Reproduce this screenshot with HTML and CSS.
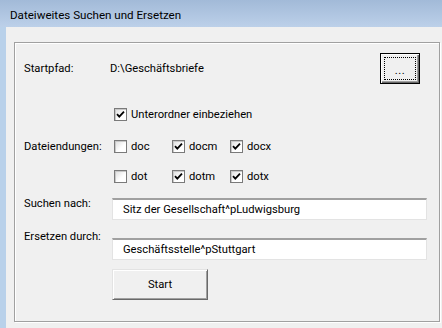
FILE: index.html
```html
<!DOCTYPE html>
<html lang="de">
<head>
<meta charset="utf-8">
<title>Dateiweites Suchen und Ersetzen</title>
<link rel="stylesheet" href="styles.css">
</head>
<body>
<div class="window">
  <div class="titlebar">Dateiweites Suchen und Ersetzen</div>
  <div class="client">
    <div class="group">
      <div class="row row-path">
        <span class="label">Startpfad:</span>
        <span class="path">D:\Geschäftsbriefe</span>
        <button class="btn btn-default"><span class="focus">...</span></button>
      </div>
      <div class="row row-sub">
        <span class="label"></span>
        <label class="check"><span class="box checked"><svg viewBox="0 0 13 13" width="13" height="13"><path d="M3 6.2 L5.3 8.6 L10 3.6" fill="none" stroke="#000" stroke-width="1.8"/></svg></span>Unterordner einbeziehen</label>
      </div>
      <div class="row row-ext1">
        <span class="label">Dateiendungen:</span>
        <label class="check ext"><span class="box"></span>doc</label>
        <label class="check ext"><span class="box checked"><svg viewBox="0 0 13 13" width="13" height="13"><path d="M3 6.2 L5.3 8.6 L10 3.6" fill="none" stroke="#000" stroke-width="1.8"/></svg></span>docm</label>
        <label class="check ext"><span class="box checked"><svg viewBox="0 0 13 13" width="13" height="13"><path d="M3 6.2 L5.3 8.6 L10 3.6" fill="none" stroke="#000" stroke-width="1.8"/></svg></span>docx</label>
      </div>
      <div class="row row-ext2">
        <span class="label"></span>
        <label class="check ext"><span class="box"></span>dot</label>
        <label class="check ext"><span class="box checked"><svg viewBox="0 0 13 13" width="13" height="13"><path d="M3 6.2 L5.3 8.6 L10 3.6" fill="none" stroke="#000" stroke-width="1.8"/></svg></span>dotm</label>
        <label class="check ext"><span class="box checked"><svg viewBox="0 0 13 13" width="13" height="13"><path d="M3 6.2 L5.3 8.6 L10 3.6" fill="none" stroke="#000" stroke-width="1.8"/></svg></span>dotx</label>
      </div>
      <div class="row row-find">
        <span class="label label-find">Suchen nach:</span>
        <div class="textbox">Sitz der Gesellschaft^pLudwigsburg</div>
      </div>
      <div class="row row-repl">
        <span class="label label-repl">Ersetzen durch:</span>
        <div class="textbox">Geschäftsstelle^pStuttgart</div>
      </div>
      <div class="row row-start">
        <span class="label"></span>
        <button class="btn btn-start">Start</button>
      </div>
    </div>
  </div>
</div>
</body>
</html>
```
FILE: styles.css
```css
* { box-sizing: border-box; }
html, body {
  margin: 0;
  padding: 0;
  width: 442px;
  height: 328px;
  overflow: hidden;
}
body {
  background: #b9d1ea;
  font-family: Roboto, "Noto Sans", sans-serif;
  font-size: 11.2px;
  color: #000;
}
.window {
  display: flex;
  flex-direction: column;
  height: 328px;
}
.titlebar {
  height: 27px;
  flex: none;
  padding-left: 10px;
  line-height: 27px;
  padding-top: 2px;
  background: linear-gradient(#a2bad8, #bcd0e9);
  color: #000;
  font-size: 11.6px;
}
.client {
  flex: 1;
  margin-left: 6px;
  background: #f0f0f0;
  padding: 15px 2px 6px 8px;
}
.group {
  height: 280px;
  border: 1px solid #a0a0a0;
  box-shadow: 1px 1px 0 #fff, inset 1px 1px 0 #fff;
  padding: 0 0 0 9px;
}
.row {
  display: flex;
  align-items: center;
}
.label {
  width: 88px;
  flex: none;
  white-space: nowrap;
}
.row-path { margin-top: 9px; height: 33px; }
.path { flex: 1; margin-left: -2px; }
.row-sub { margin-top: 19px; height: 20px; }
.row-ext1 { margin-top: 12px; height: 20px; }
.row-ext2 { margin-top: 10px; height: 20px; }
.row-find { margin-top: 12px; height: 22px; align-items: flex-start; }
.row-repl { margin-top: 18px; height: 22px; align-items: flex-start; }
.row-start { margin-top: 9px; height: 31px; }
.label-find { margin-top: -1px; }
.label-repl { margin-top: -8px; }

.check {
  display: flex;
  align-items: center;
  margin-left: 2px;
}
.check.ext { width: 56px; }
.box {
  width: 13px;
  height: 13px;
  flex: none;
  margin-right: 4px;
  border: 1px solid #7a7a7a;
  background: linear-gradient(135deg, #dcdcdc, #ffffff 60%);
  box-shadow: inset 1px 1px 0 #c8c8c8;
  position: relative;
}
.box svg {
  position: absolute;
  left: -1px;
  top: -1px;
}
.textbox {
  width: 315px;
  height: 22px;
  background: #fff;
  border-top: 2px solid #a0a0a0;
  border-left: 1px solid #e3e3e3;
  border-right: 1px solid #e3e3e3;
  border-bottom: 1px solid #e3e3e3;
  padding-left: 10px;
  line-height: 19px;
  white-space: nowrap;
  overflow: hidden;
}
.btn {
  font-family: inherit;
  font-size: 11.2px;
  background: #f0f0f0;
  color: #000;
  padding: 0;
  margin: 0;
}
.btn-default {
  width: 40px;
  height: 31px;
  margin-right: 19px;
  border: 1px solid #000;
  box-shadow: inset 1px 1px 0 #fff, inset -1px -1px 0 #696969, inset -2px -2px 0 #a0a0a0;
  display: flex;
  padding: 3px;
}
.focus {
  flex: 1;
  border: 1px dotted #000;
  display: flex;
  align-items: center;
  justify-content: center;
  line-height: 1;
  padding-top: 4px;
  letter-spacing: 0.5px;
}
.btn-start {
  width: 96px;
  height: 31px;
  border: 1px solid;
  border-color: #e3e3e3 #696969 #696969 #e3e3e3;
  box-shadow: inset 1px 1px 0 #fff, inset -1px -1px 0 #a0a0a0;
}
```
